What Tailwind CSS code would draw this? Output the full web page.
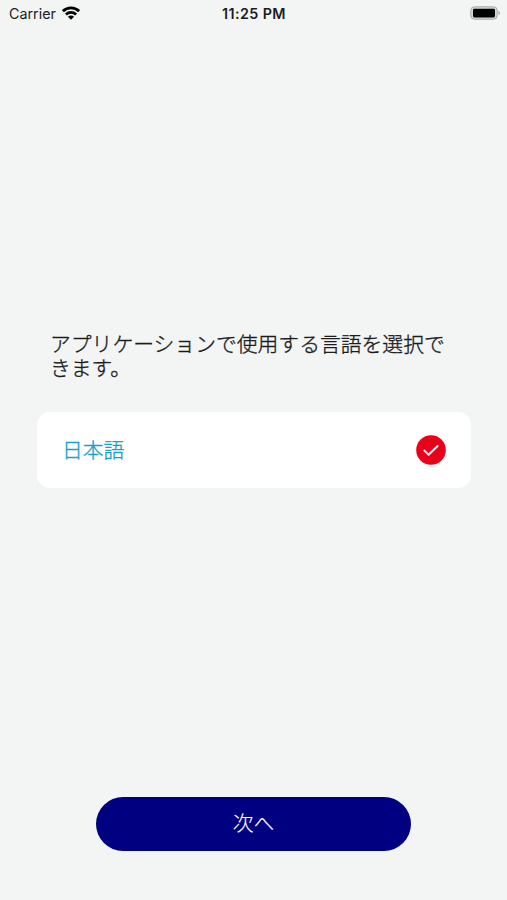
<!DOCTYPE html>
<html lang="ja">
<head>
<meta charset="utf-8">
<meta name="viewport" content="width=device-width, initial-scale=1">
<title>言語選択</title>
<script src="https://cdn.jsdelivr.net/npm/@tailwindcss/browser@4"></script>
</head>
<body class="flex h-[900px] w-[507px] flex-col overflow-hidden bg-[#f3f5f5] font-['Noto_Sans_CJK_JP',sans-serif] text-[#1c1c1c]">
<header class="grid h-7 shrink-0 grid-cols-3 items-center pl-[9px] pr-[6px] font-['Inter',sans-serif] text-[14.3px] leading-7">
  <div class="flex items-center gap-[6px]">
    <span>Carrier</span>
    <svg class="-mt-[2px] h-[14px] w-[18px]" viewBox="0 0 18 14" fill="none" stroke="#000" stroke-width="2.8">
      <path d="M.9 5.2C5.4.8 12.6.8 17.1 5.2M3.9 8.4c2.9-2.7 7.3-2.7 10.2 0"/>
      <path d="M9 13.8 5.9 10.7c1.8-1.6 4.4-1.6 6.2 0Z" fill="#000" stroke="none"/>
    </svg>
  </div>
  <span class="-ml-[2px] whitespace-nowrap text-center text-[14.3px] font-semibold tracking-[0.4px]">11:25 PM</span>
  <svg class="-mt-[2px] h-[14px] w-[31px] justify-self-end" viewBox="0 0 31 14">
    <rect x=".8" y=".8" width="26.4" height="12.4" rx="3.6" fill="#d5d7d7" stroke="#a7a9a9" stroke-width="1"/>
    <rect x="3" y="2.8" width="22" height="8.6" rx="1.4" fill="#000"/>
    <path d="M28.5 4.8c2 .8 2 3.6 0 4.4Z" fill="#a7a9a9"/>
  </svg>
</header>
<main class="flex flex-1 flex-col px-[37px] pt-[303px]">
  <h1 class="whitespace-nowrap pl-[13px] text-[20.8px] font-light leading-6 [-webkit-text-stroke:0.35px_#1c1c1c]">アプリケーションで使用する言語を選択で<br>きます。</h1>
  <div class="mt-[33px] flex h-[76px] w-[434px] items-center justify-between rounded-[13px] bg-white pl-[25px] pr-[25px]">
    <span class="-mt-[3px] text-[20.75px] font-light leading-6 text-[#189fca] [-webkit-text-stroke:0.35px_#189fca]">日本語</span>
    <svg class="h-[30px] w-[30px]" viewBox="0 0 30 30" fill="none">
      <circle cx="15" cy="15" r="14.8" fill="#ea0019"/>
      <path d="m8.4 15.6 4.2 4.2L21.6 11" stroke="#fff" stroke-width="2" stroke-linecap="round" stroke-linejoin="round"/>
    </svg>
  </div>
</main>
<footer class="flex justify-center pb-[49px]">
  <button class="h-[54px] w-[315px] rounded-[27px] bg-[#000080] pb-[5px] text-[20.75px] font-light leading-6 text-white [-webkit-text-stroke:0.15px_#fff]">次へ</button>
</footer>
</body>
</html>
